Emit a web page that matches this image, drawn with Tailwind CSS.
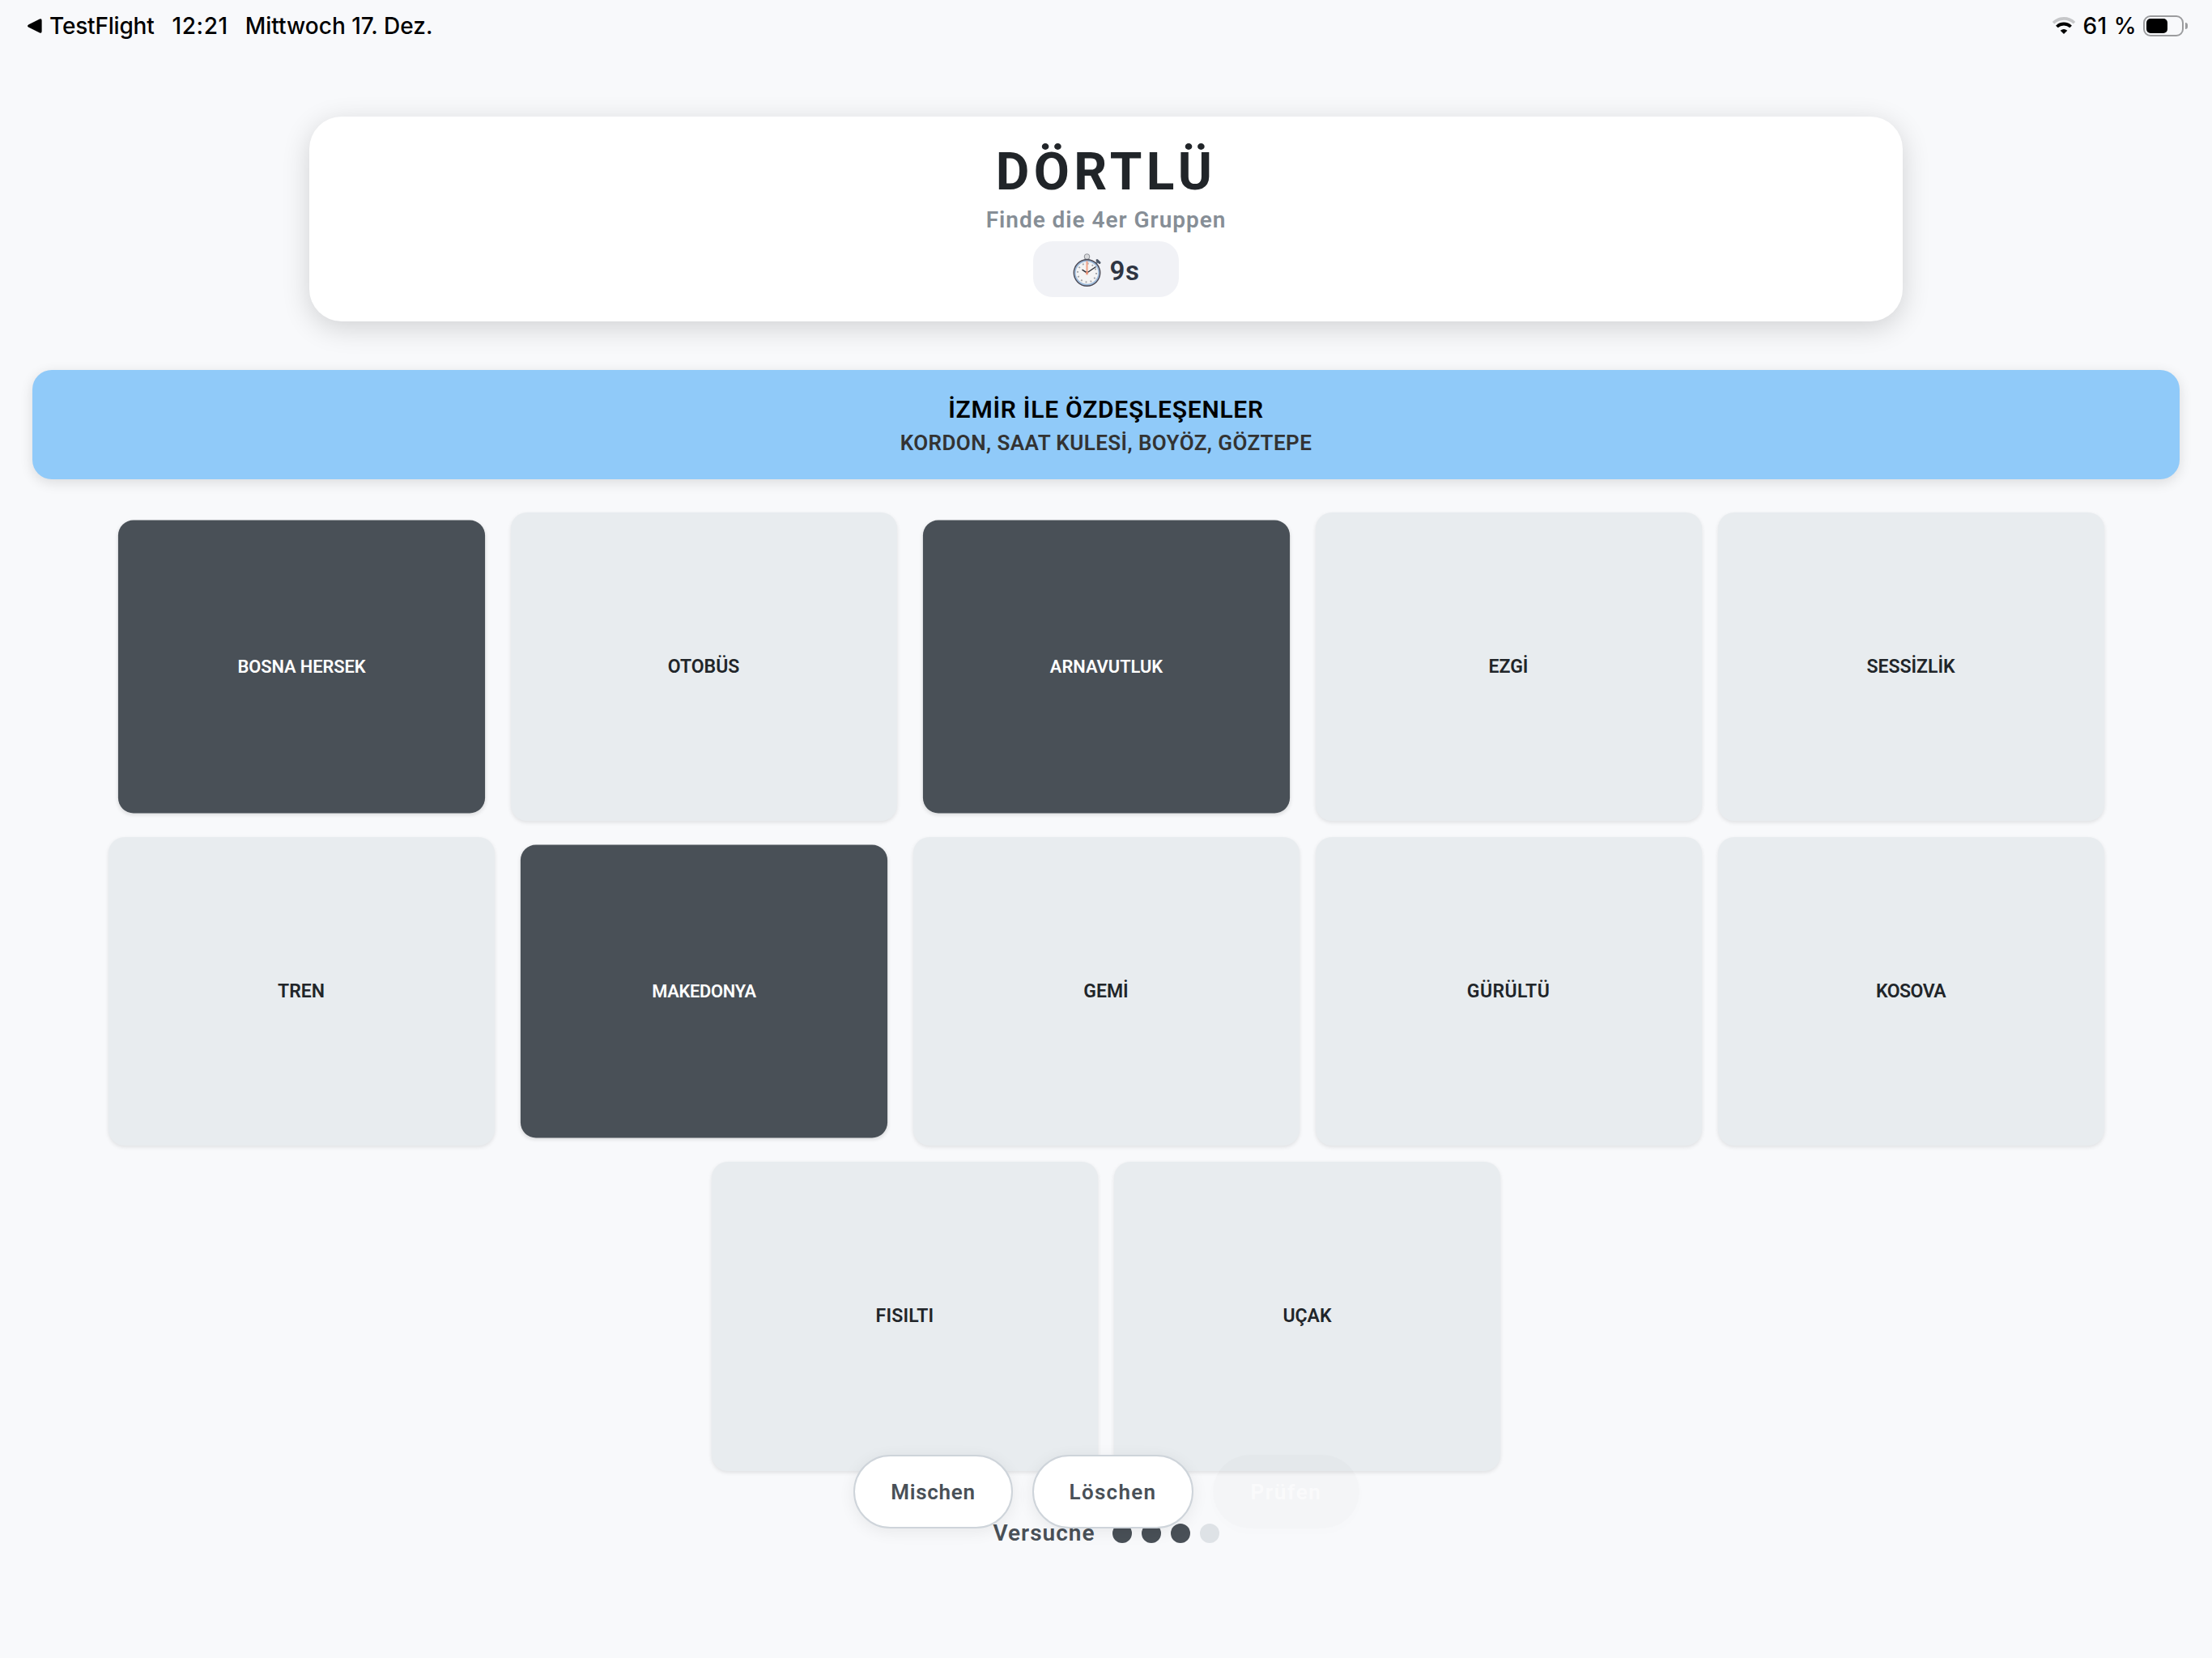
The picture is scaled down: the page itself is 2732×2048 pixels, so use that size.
<!DOCTYPE html>
<html lang="de">
<head>
  <meta charset="UTF-8" />
  <meta name="viewport" content="width=device-width, initial-scale=1.0" />
  <title>Dörtlü</title>
  <script src="https://cdn.jsdelivr.net/npm/@tailwindcss/browser@4"></script>
</head>
<body class="bg-[#f8f9fb] w-[2732px] h-[2048px] overflow-hidden flex flex-col items-center relative font-['Roboto',sans-serif] font-semibold">
<!-- Statusleiste -->
<div class="w-full h-16 pl-[33px] pr-[30px] flex items-center justify-between text-black text-[28px] leading-8 font-medium font-['Inter',sans-serif]">
  <div class="flex items-center">
    <svg class="w-5 h-5" viewBox="0 0 20 20"><path d="M2.5 8.2 16 1.6q2.6-1 2.6 1.6v13.6q0 2.6-2.6 1.6L2.5 11.8q-3-1.8 0-3.6z" fill="#000" /></svg>
    <span class="ml-[8px] tracking-[-0.2px]">TestFlight</span>
    <span class="ml-[22px] tracking-[0.6px]">12:21</span>
    <span class="ml-[21px]">Mittwoch 17. Dez.</span>
  </div>
  <div class="flex items-center">
    <!-- WLAN -->
    <svg class="w-[30px] h-[22px]" viewBox="0 0 30 22" fill="none">
      <path d="M2 7.2A18.500 18.500 0 0 1 28 7.2" stroke="#c6c7c9" stroke-width="3.6" />
      <path d="M6.4 12A12.300 12.300 0 0 1 23.6 12" stroke="#000" stroke-width="3.8" />
      <path d="M15 21l-4.3-4.3q4.3-3.4 8.6 0z" fill="#000" />
    </svg>
    <span class="ml-[8px] tracking-[0.5px]">61 %</span>
    <!-- Akku -->
    <div class="ml-[8px] w-[50px] h-[26px] border-2 border-[#9b9c9e] rounded-[9px] p-[2px]">
      <div class="w-[26px] h-full bg-black rounded-[5px]"></div>
    </div>
    <div class="ml-[2px] w-[3px] h-2 bg-[#9b9c9e] rounded-r-full"></div>
  </div>
</div>

<!-- Kopfbereich -->
<header class="mt-20 w-[1968px] h-[253px] pt-[37px] bg-white rounded-[40px] shadow-[0_8px_34px_rgba(0,0,0,0.16)] flex flex-col items-center">
  <h1 class="text-[64px] leading-[64px] tracking-[5.4px] font-bold text-[#212529]">DÖRTLÜ</h1>
  <p class="mt-[9px] text-[28px] leading-9 tracking-[0.97px] text-[#868e96]">Finde die 4er Gruppen</p>
  <div class="mt-[8px] w-[180px] h-[69px] pt-1 bg-[#f1f2f6] rounded-3xl flex items-center justify-center">
    <!-- Stoppuhr -->
    <svg class="w-[36px] h-[42px] -mt-0.5" viewBox="0 0 36 42">
      <rect x="14.5" y="4" width="6" height="5" fill="#9a9da3" />
      <circle cx="17.5" cy="4" r="3.3" fill="#d9dadd" stroke="#8b8e94" />
      <path d="M28.500 12.500l2.500-2.500" stroke="#6d7b8d" stroke-width="2.500" />
      <path d="M30 8.500l3 3" stroke="#4a5564" stroke-width="3" stroke-linecap="round" />
      <circle cx="17.5" cy="24" r="16" fill="#f4f4f4" stroke="#4c4a55" stroke-width="1.8" />
      <circle cx="17.5" cy="24" r="14.600" fill="none" stroke="#9dbbdc" stroke-width="1.6" />
      <circle cx="17.5" cy="24" r="11.500" fill="none" stroke="#a3a4a8" stroke-width="2" stroke-dasharray="1.8 4.221" />
      <path d="M17.5 9.500v17" stroke="#f2a68c" stroke-width="2.2" />
      <path d="M17.5 24l11-7.500M17.5 24l-6-3.800" stroke="#33343b" stroke-width="1.5" />
      <circle cx="17.5" cy="24" r="1.600" fill="#e58f74" />
    </svg>
    <span class="ml-[10px] text-[33px] leading-9 tracking-[0.5px] text-[#2f3542]">9s</span>
  </div>
</header>

<!-- Gelöste Gruppe -->
<section class="mt-[60px] w-[2652px] h-[135px] pt-[31px] bg-[#90caf9] rounded-3xl shadow-[0_4px_16px_rgba(0,0,0,0.12)] text-center">
  <h2 class="text-[30px] leading-9 tracking-[0.75px] text-black">İZMİR İLE ÖZDEŞLEŞENLER</h2>
  <p class="mt-1.5 text-[26px] leading-[34px] tracking-[0.42px] text-[#333333]">KORDON, SAAT KULESİ, BOYÖZ, GÖZTEPE</p>
</section>

<!-- Wortkarten -->
<main class="mt-[41px] w-[2466px] flex flex-wrap justify-center gap-x-5 gap-y-5 text-[23px] leading-7 text-[#212529]">
  <div class="w-[477px] h-[381px] bg-[#495057] rounded-[20px] shadow-[0_2px_5px_rgba(0,0,0,0.1)] flex items-center justify-center scale-95 text-white tracking-[-0.1px]">BOSNA HERSEK</div>
  <div class="w-[477px] h-[381px] bg-[#e8ecef] rounded-[20px] shadow-[0_2px_5px_rgba(0,0,0,0.1)] flex items-center justify-center">OTOBÜS</div>
  <div class="w-[477px] h-[381px] bg-[#495057] rounded-[20px] shadow-[0_2px_5px_rgba(0,0,0,0.1)] flex items-center justify-center scale-95 text-white">ARNAVUTLUK</div>
  <div class="w-[477px] h-[381px] bg-[#e8ecef] rounded-[20px] shadow-[0_2px_5px_rgba(0,0,0,0.1)] flex items-center justify-center">EZGİ</div>
  <div class="w-[477px] h-[381px] bg-[#e8ecef] rounded-[20px] shadow-[0_2px_5px_rgba(0,0,0,0.1)] flex items-center justify-center">SESSİZLİK</div>
  <div class="w-[477px] h-[381px] bg-[#e8ecef] rounded-[20px] shadow-[0_2px_5px_rgba(0,0,0,0.1)] flex items-center justify-center">TREN</div>
  <div class="w-[477px] h-[381px] bg-[#495057] rounded-[20px] shadow-[0_2px_5px_rgba(0,0,0,0.1)] flex items-center justify-center scale-95 text-white tracking-[-0.3px]">MAKEDONYA</div>
  <div class="w-[477px] h-[381px] bg-[#e8ecef] rounded-[20px] shadow-[0_2px_5px_rgba(0,0,0,0.1)] flex items-center justify-center">GEMİ</div>
  <div class="w-[477px] h-[381px] bg-[#e8ecef] rounded-[20px] shadow-[0_2px_5px_rgba(0,0,0,0.1)] flex items-center justify-center tracking-[0.4px]">GÜRÜLTÜ</div>
  <div class="w-[477px] h-[381px] bg-[#e8ecef] rounded-[20px] shadow-[0_2px_5px_rgba(0,0,0,0.1)] flex items-center justify-center tracking-[-0.5px]">KOSOVA</div>
  <div class="w-[477px] h-[382px] bg-[#e8ecef] rounded-[20px] shadow-[0_2px_5px_rgba(0,0,0,0.1)] flex items-center justify-center tracking-[0.2px]">FISILTI</div>
  <div class="w-[477px] h-[382px] bg-[#e8ecef] rounded-[20px] shadow-[0_2px_5px_rgba(0,0,0,0.1)] flex items-center justify-center">UÇAK</div>
</main>

<!-- Versuche -->
<div class="mt-[59px] flex items-center text-[28px] leading-9 text-[#495057]">
  <span class="tracking-[1px]">Versuche</span>
  <div class="ml-[21px] flex gap-3">
    <span class="w-6 h-6 rounded-full bg-[#495057]"></span>
    <span class="w-6 h-6 rounded-full bg-[#495057]"></span>
    <span class="w-6 h-6 rounded-full bg-[#495057]"></span>
    <span class="w-6 h-6 rounded-full bg-[#dee2e6]"></span>
  </div>
</div>

<!-- Aktionen, liegen über dem Spielfeld -->
<div class="absolute top-[1797px] left-[1054px] flex gap-6 text-[26px] text-[#495057]">
  <button class="w-[197px] h-[91px] pt-0.5 bg-white border-2 border-[#ced4da] rounded-full shadow-[0_4px_20px_rgba(0,0,0,0.07)] tracking-[0.7px]">Mischen</button>
  <button class="w-[199px] h-[91px] pt-0.5 bg-white border-2 border-[#ced4da] rounded-full shadow-[0_4px_20px_rgba(0,0,0,0.07)] tracking-[1.3px]">Löschen</button>
  <button class="w-[181px] h-[91px] pt-0.5 bg-black/[0.015] text-white/60 rounded-full shadow-[0_4px_16px_rgba(0,0,0,0.012)] tracking-[1.7px]" disabled>Prüfen</button>
</div>
</body>
</html>
